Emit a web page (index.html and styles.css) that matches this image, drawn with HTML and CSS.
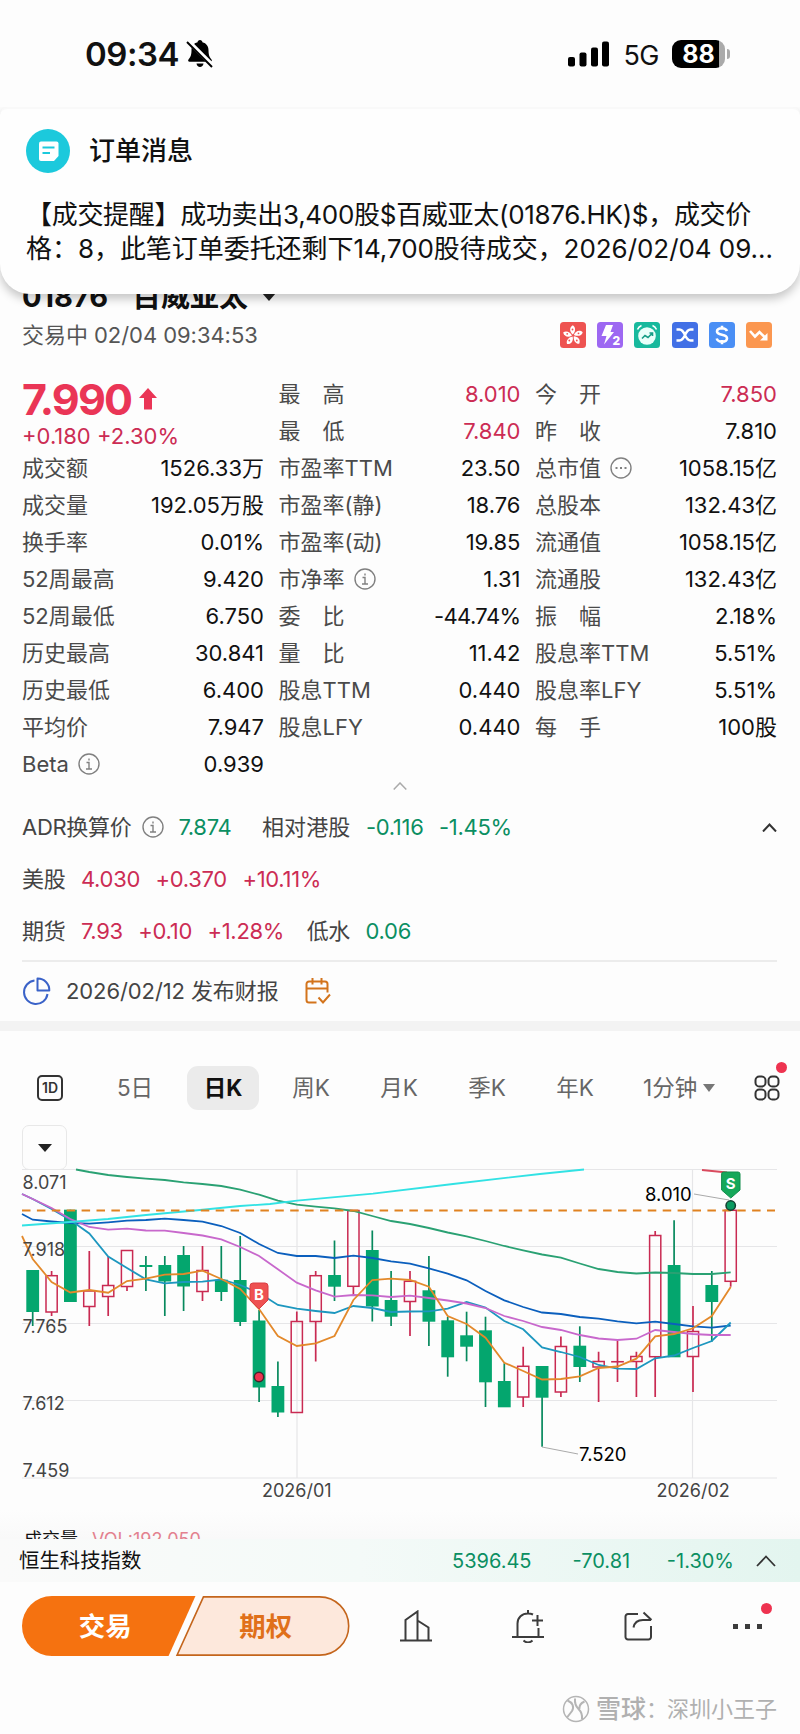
FILE: index.html
```html
<!DOCTYPE html>
<html lang="zh-CN">
  <head>
    <meta charset="UTF-8" />
    <meta name="viewport" content="width=device-width, initial-scale=1.0" />
    <title>01876 百威亚太</title>
    <link rel="stylesheet" href="styles.css">
  </head>
  <body>
    <div class="page">
      <header class="status-bar">
        <span class="time">09:34</span>
        <svg class="mute" width="28" height="28" viewBox="0 0 28 28">
          <path d="M14 0c1.500 0 2.300 1 2.400 2.200 4 1 6.100 4 6.100 8 0 5.600 1.500 7.300 3 9.300.8 1.100.2 2.300-1 2.300H3.500c-1.200 0-1.800-1.200-1-2.300 1.500-2 3-3.700 3-9.300 0-4 2.100-7 6.100-8C11.700 1 12.500 0 14 0zM10.500 23.600h7c-.3 2-1.700 3.400-3.500 3.400s-3.200-1.400-3.500-3.400z" />
          <path d="M2.500 1.500 27 26" stroke="#fff" stroke-width="4.500" />
          <path d="M1 2 26 27" stroke="#000" stroke-width="2" />
        </svg>
        <svg class="signal" width="42" height="26" viewBox="0 0 42 26">
          <rect x="0" y="16" width="7" height="9.500" rx="2" />
          <rect x="11.500" y="11.500" width="7" height="14" rx="2" />
          <rect x="23" y="6.500" width="7" height="19" rx="2" />
          <rect x="34" y="0.500" width="7" height="25" rx="2" />
        </svg>
        <span class="network">5G</span>
        <span class="battery"><b>88</b></span>
        <i class="battery-tip"></i>
      </header>

      <section class="banner">
        <div class="banner-head">
          <svg width="44" height="44" viewBox="0 0 44 44">
            <circle cx="22" cy="22" r="22" fill="#1cc9dc" />
            <path d="M15 12.500h15.500a2 2 0 0 1 2 2V27l-4.500 5H15a2 2 0 0 1-2-2V14.500a2 2 0 0 1 2-2z" fill="#fff" />
            <path d="M16.500 18.500h12M16.500 24h7.500" stroke="#1cc9dc" stroke-width="2" />
          </svg>
          <h2>订单消息</h2>
        </div>
        <p class="line-one">【成交提醒】成功卖出3,400股$百威亚太(01876.HK)$，成交价</p>
        <p class="line-two">格：8，此笔订单委托还剩下14,700股待成交，2026/02/04 09…</p>
      </section>

      <main>
        <div class="stock-title">
          <span class="code">01876</span>
          <span>百威亚太</span>
          <i class="caret"></i>
        </div>
        <div class="stock-sub">
          <span>交易中 02/04 09:34:53</span>
          <div class="tags">
            <svg class="tag" viewBox="0 0 26 26">
              <rect width="26" height="26" rx="3.500" fill="#ee5351" />
              <g fill="#fff">
                <path d="M12.800 12.500C9.500 10 9 5.500 12.800 3.200c2.800 1.600 3.200 6 0 9.300z" />
                <path d="M12.800 12.500C9.500 10 9 5.500 12.800 3.200c2.800 1.600 3.200 6 0 9.300z" transform="rotate(72 13 13.500)" />
                <path d="M12.800 12.500C9.500 10 9 5.500 12.800 3.200c2.800 1.600 3.200 6 0 9.300z" transform="rotate(144 13 13.500)" />
                <path d="M12.800 12.500C9.500 10 9 5.500 12.800 3.200c2.800 1.600 3.200 6 0 9.300z" transform="rotate(216 13 13.500)" />
                <path d="M12.800 12.500C9.500 10 9 5.500 12.800 3.200c2.800 1.600 3.200 6 0 9.300z" transform="rotate(288 13 13.500)" />
              </g>
              <g fill="#ee5351">
                <circle cx="12.500" cy="7.500" r=".9" /><circle cx="18.500" cy="11.300" r=".9" /><circle cx="16.800" cy="18.500" r=".9" /><circle cx="9.300" cy="18.500" r=".9" /><circle cx="7.200" cy="11.800" r=".9" />
              </g>
            </svg>
            <svg class="tag" viewBox="0 0 26 26">
              <rect width="26" height="26" rx="3.500" fill="#9d68f2" />
              <path d="M9 3h7l-2.500 7H17L7 22.500 9.500 14H4.500z" fill="#fff" />
              <text x="15.500" y="23" font-size="12" font-weight="800" fill="#fff">2</text>
            </svg>
            <svg class="tag" viewBox="0 0 26 26">
              <rect width="26" height="26" rx="3.500" fill="#18b99d" />
              <circle cx="13" cy="14" r="8.800" fill="#e9fffa" />
              <path d="M3.500 7.500c.8-2 2-3.200 4-4M22.500 7.500c-.8-2-2-3.200-4-4" stroke="#fff" stroke-width="1.600" fill="none" />
              <path d="M8 16.500l3-3 3 2 4-4M15.500 11h3v3" stroke="#159d86" stroke-width="1.600" fill="none" />
            </svg>
            <svg class="tag" viewBox="0 0 26 26">
              <rect width="26" height="26" rx="3.500" fill="#4270e6" />
              <path d="M4.500 7.500h3c6 0 5 11 11 11h3M21.500 7.500h-3c-6 0-5 11-11 11h-3" stroke="#fff" stroke-width="2.500" fill="none" />
            </svg>
            <svg class="tag" viewBox="0 0 26 26">
              <rect width="26" height="26" rx="3.500" fill="#4a8ff5" />
              <path d="M18 9c-.8-2-2.500-2.800-5-2.800-3 0-5 1.200-5 3.300C8 14 18 11.500 18 16.200c0 2.200-2 3.500-5 3.500-2.800 0-4.700-1-5.300-3.200M13 3.800v4M13 18v4.200" stroke="#fff" stroke-width="2.600" fill="none" />
            </svg>
            <svg class="tag" viewBox="0 0 26 26">
              <rect width="26" height="26" rx="3.500" fill="#fb9750" />
              <path d="M4 9l5 5.500 4.500-4.500 6 6" stroke="#fff" stroke-width="2.600" fill="none" />
              <path d="M21.500 11v7.500H14z" fill="#fff" />
            </svg>
          </div>
        </div>

        <div class="stats">
          <div class="col">
            <div class="price">
              <strong>7.990</strong>
              <svg width="18" height="22" viewBox="0 0 18 22"><path d="M9 0l9 10h-5v11.500H5V10H0z" fill="#ea3556" /></svg>
            </div>
            <div class="change red">+0.180 +2.30%</div>
            <div class="row"><span>成交额</span><b>1526.33万</b></div>
            <div class="row"><span>成交量</span><b>192.05万股</b></div>
            <div class="row"><span>换手率</span><b>0.01%</b></div>
            <div class="row"><span>52周最高</span><b>9.420</b></div>
            <div class="row"><span>52周最低</span><b>6.750</b></div>
            <div class="row"><span>历史最高</span><b>30.841</b></div>
            <div class="row"><span>历史最低</span><b>6.400</b></div>
            <div class="row"><span>平均价</span><b>7.947</b></div>
            <div class="row"><span>Beta</span><svg class="info" viewBox="0 0 22 22"><circle cx="11" cy="11" r="10" /><path d="M8.500 9.500H11v6.500M8 16h6M11 5.500v2" /></svg><b>0.939</b></div>
          </div>
          <div class="col">
            <div class="row"><span>最　高</span><b class="red">8.010</b></div>
            <div class="row"><span>最　低</span><b class="red">7.840</b></div>
            <div class="row"><span>市盈率TTM</span><b>23.50</b></div>
            <div class="row"><span>市盈率(静)</span><b>18.76</b></div>
            <div class="row"><span>市盈率(动)</span><b>19.85</b></div>
            <div class="row"><span>市净率</span><svg class="info" viewBox="0 0 22 22"><circle cx="11" cy="11" r="10" /><path d="M8.500 9.500H11v6.500M8 16h6M11 5.500v2" /></svg><b>1.31</b></div>
            <div class="row"><span>委　比</span><b class="tight">-44.74%</b></div>
            <div class="row"><span>量　比</span><b>11.42</b></div>
            <div class="row"><span>股息TTM</span><b>0.440</b></div>
            <div class="row"><span>股息LFY</span><b>0.440</b></div>
          </div>
          <div class="col">
            <div class="row"><span>今　开</span><b class="red">7.850</b></div>
            <div class="row"><span>昨　收</span><b>7.810</b></div>
            <div class="row"><span>总市值</span><svg class="info" viewBox="0 0 22 22"><circle cx="11" cy="11" r="10" /><path d="M5.500 11h2M10 11h2M14.500 11h2" stroke-width="2" /></svg><b>1058.15亿</b></div>
            <div class="row"><span>总股本</span><b>132.43亿</b></div>
            <div class="row"><span>流通值</span><b>1058.15亿</b></div>
            <div class="row"><span>流通股</span><b>132.43亿</b></div>
            <div class="row"><span>振　幅</span><b>2.18%</b></div>
            <div class="row"><span>股息率TTM</span><b>5.51%</b></div>
            <div class="row"><span>股息率LFY</span><b>5.51%</b></div>
            <div class="row"><span>每　手</span><b>100股</b></div>
          </div>
        </div>
        <div class="fold">
          <svg width="14" height="8" viewBox="0 0 14 8"><path d="M.7 7.500 7 1l6.300 6.500" fill="none" stroke="#aaa" stroke-width="1.500" /></svg>
        </div>

        <div class="linked">
          <div class="linked-row">
            <span>ADR换算价</span>
            <svg class="info" viewBox="0 0 22 22"><circle cx="11" cy="11" r="10" /><path d="M8.500 9.500H11v6.500M8 16h6M11 5.500v2" /></svg>
            <span class="green adr">7.874</span>
            <span class="second">相对港股</span>
            <span class="green">-0.116</span>
            <span class="green">-1.45%</span>
            <svg class="up" width="15" height="9" viewBox="0 0 15 9"><path d="M1 8.500l6.500-7 6.500 7" fill="none" stroke="#333" stroke-width="2" /></svg>
          </div>
          <div class="linked-row">
            <span>美股</span>
            <span class="red">4.030</span>
            <span class="red">+0.370</span>
            <span class="red">+10.11%</span>
          </div>
          <div class="linked-row">
            <span>期货</span>
            <span class="red">7.93</span>
            <span class="red">+0.10</span>
            <span class="red">+1.28%</span>
            <span class="premium">低水</span>
            <span class="green">0.06</span>
          </div>
        </div>

        <div class="report">
          <svg width="29" height="29" viewBox="0 0 29 29" fill="none" stroke="#3a62c8" stroke-width="2">
            <path d="M12.500 3.500A11.800 11.800 0 1 0 25.500 17" />
            <path d="M15.500 1.500A11.500 11.500 0 0 1 27.300 13.500H15.500z" stroke-linejoin="round" />
          </svg>
          <span>2026/02/12 发布财报</span>
          <svg width="26" height="27" viewBox="0 0 26 27" fill="none" stroke="#d3741c" stroke-width="2">
            <path d="M11.500 24.500H4a2.500 2.500 0 0 1-2.500-2.500V6A2.500 2.500 0 0 1 4 3.500h16A2.500 2.500 0 0 1 22.500 6v8.500M1.500 10.500h21M7.500 0v6.500M16.500 0v6.500M13.500 19.500l4.500 5 7-8" />
          </svg>
        </div>
      </main>

      <nav class="tabs">
        <span class="one-day">1D</span>
        <span class="tab">5日</span>
        <span class="tab active">日K</span>
        <span class="tab">周K</span>
        <span class="tab">月K</span>
        <span class="tab">季K</span>
        <span class="tab">年K</span>
        <span class="tab minute">1分钟<i class="caret small"></i></span>
        <span class="apps">
          <svg width="26" height="26" viewBox="0 0 26 26" fill="none" stroke="#333" stroke-width="2">
            <rect x="1.500" y="1.500" width="10" height="10" rx="3.800" />
            <rect x="14.500" y="1.500" width="10" height="10" rx="3.800" />
            <rect x="1.500" y="14.500" width="10" height="10" rx="3.800" />
            <rect x="14.500" y="14.500" width="10" height="10" rx="3.800" />
          </svg>
          <i class="dot"></i>
        </span>
      </nav>

      <section class="chart">
        <span class="picker"><i class="caret"></i></span>
        <svg id="kline" width="800" height="360" viewBox="0 0 800 360">
          <path class="grid" d="M22 19.500H777M22 96.500H777M22 173.500H777M22 250.500H777M22 328H777M297 19.500V328M692.500 19.500V328" />
          <g id="candles"></g>
          <g id="averages"></g>
          <path d="M22 60.500H775" stroke="#e08220" stroke-width="2" stroke-dasharray="8.500 6.400" />
          <g class="axis">
            <text x="22.500" y="39">8.071</text>
            <text x="22.500" y="106">7.918</text>
            <text x="22.500" y="183">7.765</text>
            <text x="22.500" y="260">7.612</text>
            <text x="22.500" y="327">7.459</text>
            <text x="262" y="347">2026/01</text>
            <text x="656.500" y="347">2026/02</text>
          </g>
          <g class="peak">
            <path d="M694 44l35 6M542 297l36 7" stroke="#aaa" />
            <text x="645" y="51">8.010</text>
            <text x="579" y="311">7.520</text>
          </g>
          <path d="M253 133h12a3 3 0 0 1 3 3v14l-9 9-9-9v-14a3 3 0 0 1 3-3z" fill="#ee5151" stroke="#d93f45" />
          <text class="flag" x="259" y="149.500">B</text>
          <circle cx="259" cy="227" r="4.700" fill="#ee3350" stroke="#42242c" stroke-width="1.500" />
          <path d="M724 22h14a2 2 0 0 1 2 2v16l-9.200 8-9.200-8V24a2 2 0 0 1 2-2z" fill="#15a85a" stroke="#138d4c" />
          <text class="flag" x="730.700" y="39">S</text>
          <circle cx="730.700" cy="55.500" r="4.700" fill="#0b9a60" stroke="#123f30" stroke-width="1.500" />
        </svg>
      </section>
      <div class="volume"><span>成交量</span><span class="vol">VOL:192,050</span></div>

      <div class="index-bar">
        <span class="name">恒生科技指数</span>
        <span>5396.45</span>
        <span class="diff">-70.81</span>
        <span class="pct">-1.30%</span>
        <svg width="20" height="12" viewBox="0 0 20 12"><path d="M1 11l9-9.500L19 11" fill="none" stroke="#333" stroke-width="1.800" /></svg>
      </div>

      <footer>
        <div class="trade">
          <svg width="328" height="60" viewBox="0 0 329 60">
            <path d="M30 0h144l-27 60H30a30 30 0 0 1 0-60z" fill="#f57210" />
            <path d="M182 .800h116.500a29.200 29.200 0 0 1 0 58.400H155.500z" fill="#fde8dc" stroke="#c4651c" stroke-width="1.600" />
            <text x="83.500" y="40" fill="#fff">交易</text>
            <text x="244.500" y="40" fill="#e0701a">期权</text>
          </svg>
        </div>
        <svg width="32" height="32" viewBox="0 0 32 32" fill="none" stroke="#3c3c3c" stroke-width="2">
          <path d="M0 30.500h32M5.500 30V10L17.500 1.500V30M17.500 10.500l11 7V30" />
        </svg>
        <svg width="32" height="33" viewBox="0 0 32 33" fill="none" stroke="#3c3c3c" stroke-width="2">
          <path d="M0 27h32M5.500 27V13.500C5.500 7.500 10 3.500 16 3.500c2 0 3.500.3 5 1M16 0v4M26.500 27v-9M20 10.500h11M25.500 5v11M11.500 30.500c2.500 2.500 6.500 2.500 9 0" />
        </svg>
        <svg width="29" height="30" viewBox="0 0 29 30" fill="none" stroke="#3c3c3c" stroke-width="2">
          <path d="M14 3H4a2.500 2.500 0 0 0-2.500 2.500V26A2.500 2.500 0 0 0 4 28.500h20.500A2.500 2.500 0 0 0 27 26V15M9.500 16.500C10.500 11 13.500 9 19 9h8M19.500 1.500 27.500 9" />
        </svg>
        <span class="more"><i></i><i></i><i></i><em class="dot"></em></span>
      </footer>

      <div class="watermark">
        <svg width="28" height="28" viewBox="0 0 28 28" fill="none" stroke="#b5b5b5">
          <circle cx="14" cy="14" r="12.500" stroke-width="1.500" />
          <path d="M5.500 5.500c5 2 7 6 4.500 10.500L5 22.500M13 3.500c-.5 5 1 8 3.500 10.500 3 3 4 6 3.500 10M22.500 6.500c-3.500 1.500-5.500 4-5 7.500" stroke-width="2" />
        </svg>
        <b>雪球</b><span class="colon">：</span><span>深圳小王子</span>
      </div>
    </div>

    <script>
      // [body top, body bottom, wick top, wick bottom, up?]
      const candles = [
        [120, 162, 120, 176, 0], [125.7, 162, 121, 166, 1], [59.7, 152, 59.7, 152, 0],
        [141, 156.5, 101, 176, 1], [135.5, 146.5, 106, 166, 1], [100.5, 136.5, 100.5, 141, 1],
        [115, 117, 106, 141, 0], [115, 131.5, 106, 166, 0], [105, 136.5, 96, 161, 0],
        [120.5, 141.5, 96, 151, 1], [129.7, 142, 96, 151, 0], [130, 172, 86, 176, 0],
        [170.5, 237.5, 160, 252, 0], [236, 262.5, 211.5, 267, 0], [171.5, 262.5, 161.5, 262.5, 1],
        [125.7, 171.5, 121, 211.5, 1], [125, 136.7, 90.5, 151, 0], [60.5, 136.3, 60.5, 145, 1],
        [100, 156.5, 80.5, 171.5, 0], [150, 166.7, 121, 176, 0], [131.3, 151.5, 121, 186, 1],
        [140.3, 171.7, 106, 196, 0], [170.3, 207.3, 167, 226.7, 0], [185.3, 196.7, 161.7, 211.3, 0],
        [180.3, 232.3, 166.7, 257, 0], [231, 257.3, 213.3, 257, 0], [216.3, 247, 196.7, 257, 1],
        [216, 247.7, 216, 296.7, 0], [196.5, 242, 186.5, 247, 1], [195.7, 217, 176.3, 232, 0],
        [211.5, 217, 201.7, 252, 1], [211.7, 211.8, 190.7, 232, 1], [206.5, 211.5, 201.7, 247, 1],
        [85.5, 206.7, 81, 247, 1], [115, 207.3, 70.3, 207, 0], [181.5, 206.5, 156, 242, 1],
        [135, 152, 121, 191.7, 0], [60.3, 131.3, 60.3, 136.7, 1]
      ];
      const x = (i) => 32.7 + 18.865 * i;

      document.getElementById("candles").innerHTML = candles
        .map(([top, bottom, high, low, up], i) => {
          const c = x(i).toFixed(1);
          if (up) {
            return `<path d="M${c} ${high}V${top}M${c} ${bottom}V${low}" stroke="#c92a52" stroke-width="1.700"/>
              <rect x="${c - 5.6}" y="${top}" width="11.200" height="${bottom - top}" fill="none" stroke="#c92a52" stroke-width="1.500"/>`;
          }
          return `<path d="M${c} ${high}V${low}" stroke="#07895d" stroke-width="1.700"/>
            <rect x="${c - 6.4}" y="${top}" width="12.800" height="${bottom - top}" fill="#04a66e"/>`;
        })
        .join("");

      // Moving averages, one value per candle
      const averages = [
        { color: "#2aa173", lead: "76 19.5 89.3 22", from: 4, values: [25, 27, 28.7, 30, 32.3, 34, 36, 39.7, 44.7, 50.7, 54.7, 56.7, 58.3, 61, 66, 71, 74, 78, 82.5, 86.3, 91, 96, 100.3, 104.5, 107.7, 113.5, 119, 122, 123.5, 122.5, 123, 124, 124, 122.3] },
        { color: "#0b5fbd", lead: "22 64", from: 0, values: [69.7, 71.5, 73, 73.7, 72.3, 70.7, 70, 68.7, 70, 71.7, 76, 83, 94, 103, 106, 106, 108, 105.7, 108, 111.3, 113.7, 118.3, 123.7, 130.3, 141, 150.3, 157, 162.5, 164, 167, 168.7, 171.3, 173.3, 171.7, 174, 176.3, 177.7, 175.5] },
        { color: "#1d97bf", lead: "22 44", from: 0, values: [49, 59, 70, 83.5, 106.5, 118, 129.3, 133.3, 132, 131.7, 129.5, 135, 143, 155, 158.7, 161, 163, 156, 158, 162, 161.5, 161.3, 158.7, 152, 157.5, 171, 179.3, 197.5, 202, 207, 215, 218.7, 219, 208.3, 205.5, 198, 191, 172.5] },
        { color: "#c868cc", lead: "22 44", from: 0, values: [49, 58, 69, 77, 79.7, 78.7, 80.5, 80.7, 83, 85.5, 89.3, 97, 106, 119.3, 132.7, 140.3, 146.7, 145, 145.3, 147, 145.7, 148, 150.5, 153.5, 158, 166, 171, 177, 180, 185, 188.5, 190, 188.7, 180, 182, 184, 185, 185] },
        { color: "#e3892b", lead: "22 86", from: 0, values: [109, 132, 142.5, 140, 142.7, 131, 128.7, 124.7, 124, 120.7, 129, 139, 159, 186, 196, 193.3, 186, 150, 130, 128.7, 130, 136.7, 166, 174, 187.7, 212.7, 221, 229.5, 229, 226.3, 218, 216.5, 208.7, 186.3, 184, 178.3, 166, 137] },
        { color: "#32e2e4", lead: "22 75.5 70 72 108 69 146 65 200 60 240 56 270 54 297 50.7 373 43.7 453 34 540 24 584 19.5", from: 0, values: [] },
        { color: "#d94a5e", lead: "702 20 727 22.5", from: 0, values: [] }
      ];

      document.getElementById("averages").innerHTML = averages
        .map(({ color, lead, from, values }) => {
          const points = values.map((v, i) => `${x(from + i).toFixed(1)} ${v}`).join(" ");
          return `<polyline points="${lead} ${points}" fill="none" stroke="${color}" stroke-width="1.800"/>`;
        })
        .join("");
    </script>
  </body>
</html>
```

FILE: styles.css
```css
* {
  box-sizing: border-box;
}

body {
  margin: 0;
  background: #fdfdfd;
  color: #111;
  font-family: Inter, "Noto Sans CJK SC", sans-serif;
  font-size: 22px;
  line-height: 26px;
}

i {
  display: block;
}

.page {
  position: relative;
  width: 800px;
  height: 1734px;
  overflow: hidden;
}

/* Status bar */
.status-bar {
  display: flex;
  align-items: center;
  height: 108px;
  padding: 0 70px 0 85px;
}

.time {
  width: 101px;
  font-size: 33px;
  font-weight: 600;
  letter-spacing: -0.5px;
}

.signal {
  margin-left: auto;
}

.network {
  margin: 3px 13px 0 13px;
  font-size: 27px;
  letter-spacing: -0.5px;
}

.battery {
  width: 53px;
  height: 28px;
  border-radius: 9px;
  background: linear-gradient(90deg, #000 88%, #aaa 88%);
  color: #fff;
  font-size: 25px;
  line-height: 28px;
  text-align: center;
}

.battery-tip {
  width: 3px;
  height: 10px;
  margin-left: 2px;
  border-radius: 0 3px 3px 0;
  background: #aaa;
}

/* Order message */
.banner {
  position: absolute;
  top: 107px;
  left: 0;
  z-index: 2;
  width: 800px;
  height: 187px;
  padding: 21px 26px 0;
  border-top: 2px solid #f9f9f9;
  border-radius: 8px 8px 30px 30px;
  background: #fefefe;
  box-shadow: 0 5px 10px rgba(0, 0, 0, 0.22);
  clip-path: inset(0 0 -30px 0);
}

.banner-head {
  display: flex;
  align-items: center;
  gap: 19px;
  height: 42px;
  margin-bottom: 26px;
}

.banner h2 {
  margin: 0;
  font-size: 26px;
  font-weight: 500;
}

.banner p {
  margin: 0;
  font-size: 26px;
  line-height: 34px;
  white-space: nowrap;
}

.line-one {
  letter-spacing: -0.3px;
}

.line-two {
  letter-spacing: -0.05px;
}

/* Quote */
main {
  height: 913px;
  padding: 172px 23px 0 22px;
}

.stock-title {
  display: flex;
  align-items: center;
  height: 34px;
  font-size: 29px;
  font-weight: 700;
}

.code {
  width: 110px;
}

.caret {
  margin-left: 14px;
  border: 7px solid transparent;
  border-top: 8px solid #222;
  border-bottom: 0;
}

.stock-sub {
  display: flex;
  align-items: center;
  justify-content: space-between;
  height: 41px;
  margin-bottom: 20px;
  padding-right: 5px;
  color: #555;
  letter-spacing: -0.05px;
}

.tags {
  display: flex;
  gap: 11.2px;
}

.tag {
  width: 26px;
  height: 26px;
}

.stats {
  display: grid;
  grid-template-columns: repeat(3, 242px);
  gap: 14.5px;
}

.price {
  display: flex;
  align-items: center;
  gap: 8px;
  height: 47px;
  color: #ea3556;
}

.price strong {
  font-size: 43px;
  letter-spacing: -1.8px;
}

.change {
  height: 27px;
  line-height: 28px;
}

.row {
  display: flex;
  align-items: center;
  height: 37px;
}

.row span {
  color: #4a4a4a;
}

.row b {
  margin-left: auto;
  font-weight: 400;
}

.row .tight {
  letter-spacing: -0.6px;
}

.row .red,
.red {
  color: #cc2c54;
}

.green {
  color: #0b8f62;
}

.info {
  width: 22px;
  height: 22px;
  margin-left: 9px;
  fill: none;
  stroke: #808080;
  stroke-width: 1.4;
}

.fold {
  display: flex;
  justify-content: center;
  height: 19px;
}

.linked {
  height: 161px;
  border-bottom: 2px solid #ececec;
}

.linked-row {
  display: flex;
  align-items: center;
  gap: 15.5px;
  height: 52px;
  color: #444;
  letter-spacing: -0.3px;
}

.linked-row .info {
  margin-left: -5px;
}

.linked-row .adr {
  margin-left: -1px;
}

.second {
  margin-left: 15px;
  letter-spacing: 0.1px;
}

.premium {
  margin-left: 7px;
}

.linked-row .red {
  color: #cc2c54;
}

.linked-row .green {
  color: #0b8f62;
}

.up {
  margin-left: auto;
}

.report {
  display: flex;
  align-items: center;
  height: 58px;
  color: #444;
}

.report span {
  width: 239px;
  margin-left: 15px;
  letter-spacing: -0.1px;
}

/* Period tabs */
.tabs {
  display: flex;
  align-items: center;
  height: 129px;
  padding: 8px 20px 14px 37px;
  border-top: 10px solid #f3f3f3;
  color: #666;
  font-size: 22.5px;
}

.one-day {
  width: 26px;
  height: 26px;
  margin-right: 28px;
  border: 2px solid #333;
  border-radius: 5px;
  color: #333;
  font-size: 14px;
  font-weight: 600;
  line-height: 22px;
  text-align: center;
}

.tab {
  width: 88px;
  text-align: center;
}

.active {
  width: 72px;
  height: 44px;
  margin: 0 8px;
  border-radius: 11px;
  background: #ebebeb;
  color: #111;
  font-weight: 700;
  line-height: 43px;
}

.caret.small {
  margin-left: 6px;
  border-width: 8px 6px 0;
  border-top-color: #777;
}

.minute {
  display: flex;
  align-items: center;
  width: auto;
  padding-left: 24px;
}

.apps {
  position: relative;
  height: 26px;
  margin-left: auto;
}

.dot {
  position: absolute;
  top: -13px;
  right: -7px;
  width: 11px;
  height: 11px;
  border-radius: 50%;
  background: #ee3350;
}

/* Chart */
.chart {
  position: relative;
  height: 360px;
}

.picker {
  position: absolute;
  top: -25px;
  left: 22px;
  width: 45px;
  height: 45px;
  padding: 18px 0 0 15px;
  border: 1px solid #e8e8e8;
  border-radius: 7px;
}

.picker .caret {
  width: 14px;
  margin: 0;
}

#kline {
  display: block;
}

.grid {
  stroke: #e6e6e8;
  stroke-width: 1.2;
}

.axis text {
  fill: #444;
  font-size: 18px;
}

.peak text {
  font-size: 18.5px;
}

.flag {
  fill: #fff;
  font-size: 15px;
  font-weight: 700;
  text-anchor: middle;
}

.volume {
  display: flex;
  gap: 14px;
  height: 29px;
  padding: 18px 24px 0;
  overflow: hidden;
  background: linear-gradient(#fdfdfd, #f9f9f9);
  font-size: 18px;
  line-height: 24px;
}

.vol {
  color: #e3818f;
}

/* Index strip */
.index-bar {
  display: flex;
  align-items: center;
  height: 43px;
  padding: 0 24px 0 19px;
  background: linear-gradient(90deg, #fafafa, #f4faf8 45%, #e3f5ef);
  color: #0b8f62;
  font-size: 20px;
}

.name {
  width: 433px;
  color: #111;
  font-size: 20.4px;
}

.diff {
  margin-left: 41px;
}

.pct {
  margin: 0 22px 0 auto;
}

/* Bottom actions */
footer {
  display: flex;
  align-items: center;
  height: 88px;
  padding: 0 38px 0 22px;
}

.trade {
  width: 378px;
  height: 60px;
}

.trade text {
  font-size: 26.5px;
  font-weight: 700;
  text-anchor: middle;
}

footer > svg {
  margin-right: auto;
}

.more {
  position: relative;
  display: flex;
  gap: 7px;
}

.more i {
  width: 5px;
  height: 5px;
  background: #3c3c3c;
}

.more .dot {
  top: -21px;
  right: -10px;
}

.watermark {
  display: flex;
  align-items: center;
  justify-content: flex-end;
  height: 34px;
  margin-top: 22px;
  padding-right: 23px;
  color: #b0b0b0;
}

.watermark b {
  margin-left: 6px;
  font-size: 25px;
  font-weight: 500;
}

.colon {
  width: 21px;
}
```
